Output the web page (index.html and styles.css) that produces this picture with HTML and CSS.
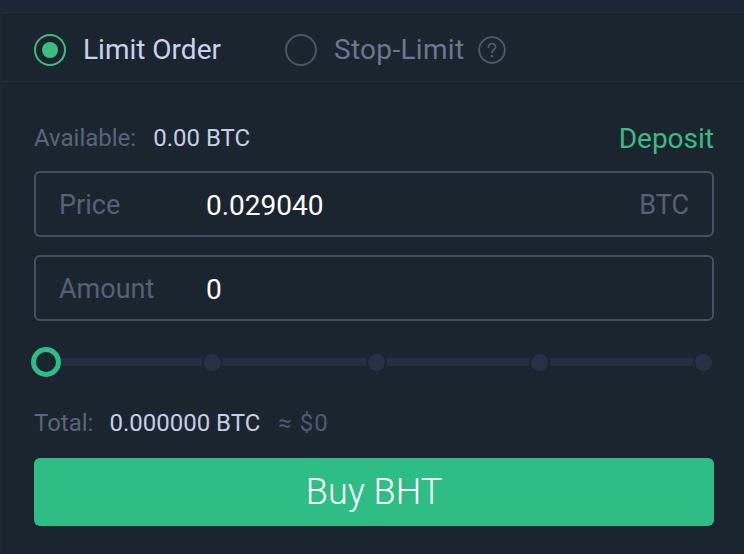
FILE: index.html
```html
<!DOCTYPE html>
<html>
<head>
<meta charset="utf-8">
<link rel="stylesheet" href="styles.css">
</head>
<body>
<div class="topstrip"></div>
<div class="panel">
  <div class="tabs">
    <div class="tab tab-active">
      <span class="radio radio-on"><span class="radio-dot"></span></span>
      <span class="tab-label">Limit Order</span>
    </div>
    <div class="tab tab-off">
      <span class="radio"></span>
      <span class="tab-label">Stop-Limit</span>
      <svg class="help" width="28" height="28" viewBox="0 0 28 28">
        <circle cx="14" cy="14" r="12.8" fill="none" stroke="#4e5a70" stroke-width="1.8"/>
        <path d="M10.4 11.2a3.6 3.6 0 0 1 7.2 0c0 2.4-3.6 2.6-3.6 5.2" fill="none" stroke="#4e5a70" stroke-width="1.8" stroke-linecap="round"/>
        <circle cx="14" cy="20.2" r="1.2" fill="#4e5a70"/>
      </svg>
    </div>
  </div>
  <div class="form">
    <div class="avail-row">
      <div class="avail">
        <span class="muted">Available:</span>
        <span class="val">0.00 BTC</span>
      </div>
      <span class="deposit">Deposit</span>
    </div>
    <div class="field">
      <span class="field-label">Price</span>
      <span class="field-value">0.029040</span>
      <span class="field-unit">BTC</span>
    </div>
    <div class="field field-second">
      <span class="field-label">Amount</span>
      <span class="field-value">0</span>
    </div>
    <div class="slider">
      <span class="knob"></span>
      <span class="seg"></span>
      <span class="dot"></span>
      <span class="seg"></span>
      <span class="dot"></span>
      <span class="seg"></span>
      <span class="dot"></span>
      <span class="seg"></span>
      <span class="dot"></span>
    </div>
    <div class="total-row">
      <span class="muted">Total:</span>
      <span class="val">0.000000 BTC</span>
      <span class="approx">≈ $0</span>
    </div>
    <button class="buy">Buy BHT</button>
  </div>
</div>
</body>
</html>
```
FILE: styles.css
```css
html, body {
  margin: 0;
  padding: 0;
}
body {
  background: #1d2634;
  font-family: Roboto, "Liberation Sans", sans-serif;
  width: 744px;
  height: 554px;
  overflow: hidden;
}
.topstrip {
  height: 12px;
  background: #1d2636;
}
.panel {
  margin-left: 2px;
  background: #1b2530;
  border-top: 1px solid #243042;
  height: 541px;
}
.tabs {
  height: 69px;
  display: flex;
  align-items: center;
  padding-left: 32px;
  padding-top: 5px;
  border-bottom: 1px solid #243042;
  box-sizing: border-box;
}
.tab {
  display: flex;
  align-items: center;
}
.tab-off {
  margin-left: 64px;
}
.radio {
  width: 32px;
  height: 32px;
  box-sizing: border-box;
  border-radius: 50%;
  border: 2px solid #4b5568;
  display: flex;
  align-items: center;
  justify-content: center;
}
.radio-on {
  border-color: #3dbd7d;
}
.radio-dot {
  width: 16px;
  height: 16px;
  border-radius: 50%;
  background: #3dbd7d;
}
.tab-label {
  font-size: 28px;
  margin-left: 17px;
  line-height: 34px;
}
.tab-active .tab-label {
  color: #c8d2ea;
}
.tab-off .tab-label {
  color: #6a7791;
  letter-spacing: 0.3px;
}
.help {
  margin-left: 14px;
  display: block;
}
.form {
  padding: 40px 30px 0 32px;
}
.avail-row {
  display: flex;
  justify-content: space-between;
  align-items: center;
  height: 32px;
}
.avail {
  font-size: 24px;
  display: flex;
  align-items: center;
}
.muted {
  color: #59647b;
}
.val {
  color: #c5cfe6;
  margin-left: 17px;
}
.deposit {
  font-size: 28px;
  color: #3dba7e;
}
.field {
  margin-top: 17px;
  height: 66px;
  box-sizing: border-box;
  border: 2px solid #454f63;
  border-radius: 6px;
  display: flex;
  align-items: center;
  padding: 2px 23px 0 23px;
  font-size: 27px;
}
.field-second {
  margin-top: 18px;
}
.field-label {
  color: #556079;
  width: 147px;
}
.field-value {
  color: #ffffff;
  flex: 1;
  font-size: 28px;
}
.field-unit {
  color: #556079;
}
.slider {
  margin-top: 26px;
  height: 30px;
  display: flex;
  align-items: center;
}
.knob {
  position: relative;
  z-index: 1;
  width: 30px;
  height: 30px;
  box-sizing: border-box;
  border-radius: 50%;
  border: 5px solid #2ebd85;
  background: #1b2530;
  flex: none;
  margin-left: -3px;
  margin-right: -2px;
}
.seg {
  flex: 1;
  height: 8px;
  background: #243042;
}
.dot {
  width: 17px;
  height: 17px;
  border-radius: 50%;
  background: #253246;
  margin: 0 2px;
  flex: none;
}
.total-row {
  margin-top: 31px;
  height: 30px;
  display: flex;
  align-items: center;
  font-size: 24px;
}
.total-row .val {
  margin-left: 16px;
}
.approx {
  color: #4e5a70;
  margin-left: 18px;
  letter-spacing: 1px;
}
.buy {
  display: block;
  margin-top: 20px;
  width: 100%;
  height: 68px;
  border: none;
  border-radius: 6px;
  background: #2ebd85;
  color: #ffffff;
  font-family: Roboto, "Liberation Sans", sans-serif;
  font-size: 36px;
  font-weight: 300;
  padding: 0;
}
```
